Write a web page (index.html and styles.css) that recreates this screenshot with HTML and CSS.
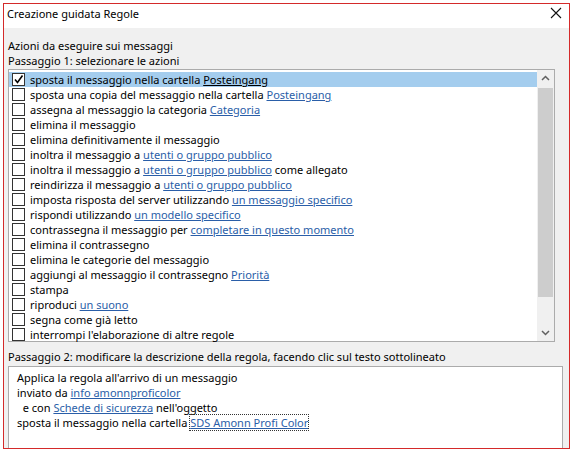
FILE: index.html
```html
<!DOCTYPE html>
<html>
<head>
<meta charset="utf-8">
<link rel="stylesheet" href="styles.css">
</head>
<body>
<div class="dialog">
  <div class="titlebar">
    <span class="title">Creazione guidata Regole</span>
    <svg class="close" width="12" height="12" viewBox="0 0 12 12"><path d="M1 1 L11 11 M11 1 L1 11" stroke="#111" stroke-width="1.1" fill="none"/></svg>
  </div>
  <div class="content">
    <div class="label first">Azioni da eseguire sui messaggi</div>
    <div class="label">Passaggio 1: selezionare le azioni</div>
    <div class="listbox">
      <div class="rows">
        <div class="row sel"><span class="cb checked"><svg width="11" height="11" viewBox="0 0 11 11"><path d="M2 5.5 L4.5 8.5 L9.5 1.5" stroke="#000" stroke-width="1.6" fill="none"/></svg></span>sposta il messaggio nella cartella <a>Posteingang</a></div>
        <div class="row"><span class="cb"></span>sposta una copia del messaggio nella cartella <a>Posteingang</a></div>
        <div class="row"><span class="cb"></span>assegna al messaggio la categoria <a>Categoria</a></div>
        <div class="row"><span class="cb"></span>elimina il messaggio</div>
        <div class="row"><span class="cb"></span>elimina definitivamente il messaggio</div>
        <div class="row"><span class="cb"></span>inoltra il messaggio a <a>utenti o gruppo pubblico</a></div>
        <div class="row"><span class="cb"></span>inoltra il messaggio a <a>utenti o gruppo pubblico</a> come allegato</div>
        <div class="row"><span class="cb"></span>reindirizza il messaggio a <a>utenti o gruppo pubblico</a></div>
        <div class="row"><span class="cb"></span>imposta risposta del server utilizzando <a>un messaggio specifico</a></div>
        <div class="row"><span class="cb"></span>rispondi utilizzando <a>un modello specifico</a></div>
        <div class="row"><span class="cb"></span>contrassegna il messaggio per <a>completare in questo momento</a></div>
        <div class="row"><span class="cb"></span>elimina il contrassegno</div>
        <div class="row"><span class="cb"></span>elimina le categorie del messaggio</div>
        <div class="row"><span class="cb"></span>aggiungi al messaggio il contrassegno <a>Priorità</a></div>
        <div class="row"><span class="cb"></span>stampa</div>
        <div class="row"><span class="cb"></span>riproduci <a>un suono</a></div>
        <div class="row"><span class="cb"></span>segna come già letto</div>
        <div class="row"><span class="cb"></span>interrompi l'elaborazione di altre regole</div>
      </div>
      <div class="scrollbar">
        <svg class="arrow" width="17" height="17" viewBox="0 0 17 17"><path d="M5 10 L8.5 6.5 L12 10" stroke="#606060" stroke-width="1.5" fill="none"/></svg>
        <div class="track"><div class="thumb"></div></div>
        <svg class="arrow" width="17" height="17" viewBox="0 0 17 17"><path d="M5 7 L8.5 10.5 L12 7" stroke="#606060" stroke-width="1.5" fill="none"/></svg>
      </div>
    </div>
    <div class="label step2">Passaggio 2: modificare la descrizione della regola, facendo clic sul testo sottolineato</div>
    <div class="descbox">
      <div class="line">Applica la regola all'arrivo di un messaggio</div>
      <div class="line">inviato da <a>info amonnproficolor</a></div>
      <div class="line">&nbsp; e con <a>Schede di sicurezza</a> nell'oggetto</div>
      <div class="line">sposta il messaggio nella cartella <a class="focus">SDS Amonn Profi Color</a></div>
    </div>
  </div>
</div>
</body>
</html>
```
FILE: styles.css
```css
html, body {
  margin: 0;
  padding: 0;
  background: #fff;
}
body {
  font-family: "Noto Sans", "Open Sans", sans-serif;
  font-size: 11px;
  color: #000;
  width: 573px;
  height: 454px;
  overflow: hidden;
}
.dialog {
  margin: 3px 0 0 3px;
  width: 565px;
  height: 444px;
  border: 1px solid #d42a2a;
  background: #f0f0f0;
  display: flex;
  flex-direction: column;
  overflow: hidden;
}
.titlebar {
  height: 24px;
  background: #fff;
  display: flex;
  align-items: center;
  justify-content: space-between;
  padding: 0 7px 0 3px;
  flex-shrink: 0;
}
.title {
  font-size: 11px;
  position: relative;
  top: -3px;
}
.close {
  position: relative;
  top: -3px;
}
.content {
  padding: 0 0 0 4px;
  flex: 1;
  display: flex;
  flex-direction: column;
}
.label {
  height: 15px;
  line-height: 15px;
  white-space: nowrap;
}
.label.first {
  margin-top: 10px;
}
.listbox {
  margin-top: 1px;
  width: 545px;
  height: 271px;
  border: 1px solid #ababab;
  background: #fff;
  display: flex;
}
.rows {
  flex: 1;
  padding-top: 2px;
}
.row {
  height: 15px;
  line-height: 15px;
  display: flex;
  align-items: center;
  white-space: pre;
  padding-left: 3px;
}
.row.sel {
  background: #a4cdee;
}
.cb {
  width: 11px;
  height: 11px;
  border: 1px solid #333;
  background: #fff;
  margin-right: 5px;
  flex-shrink: 0;
  display: flex;
}
a {
  color: #2a5ea8;
  text-decoration: underline;
}
.row.sel a {
  color: #000;
}
.scrollbar {
  width: 17px;
  background: #f0f0f0;
  display: flex;
  flex-direction: column;
}
.arrow {
  display: block;
  flex-shrink: 0;
}
.track {
  flex: 1;
  display: flex;
  flex-direction: column;
}
.thumb {
  margin: 1px 1px 0 1px;
  height: 209px;
  background: #cdcdcd;
}
.step2 {
  margin-top: 7px;
}
.descbox {
  margin-top: 2px;
  width: 545px;
  flex: 1;
  border: 1px solid #ababab;
  border-bottom: none;
  background: #fff;
  padding: 3px 0 0 8px;
}
.line {
  height: 15px;
  line-height: 15px;
  white-space: pre;
}
a.focus {
  outline: 1px dotted #333;
  outline-offset: 0;
}
```
